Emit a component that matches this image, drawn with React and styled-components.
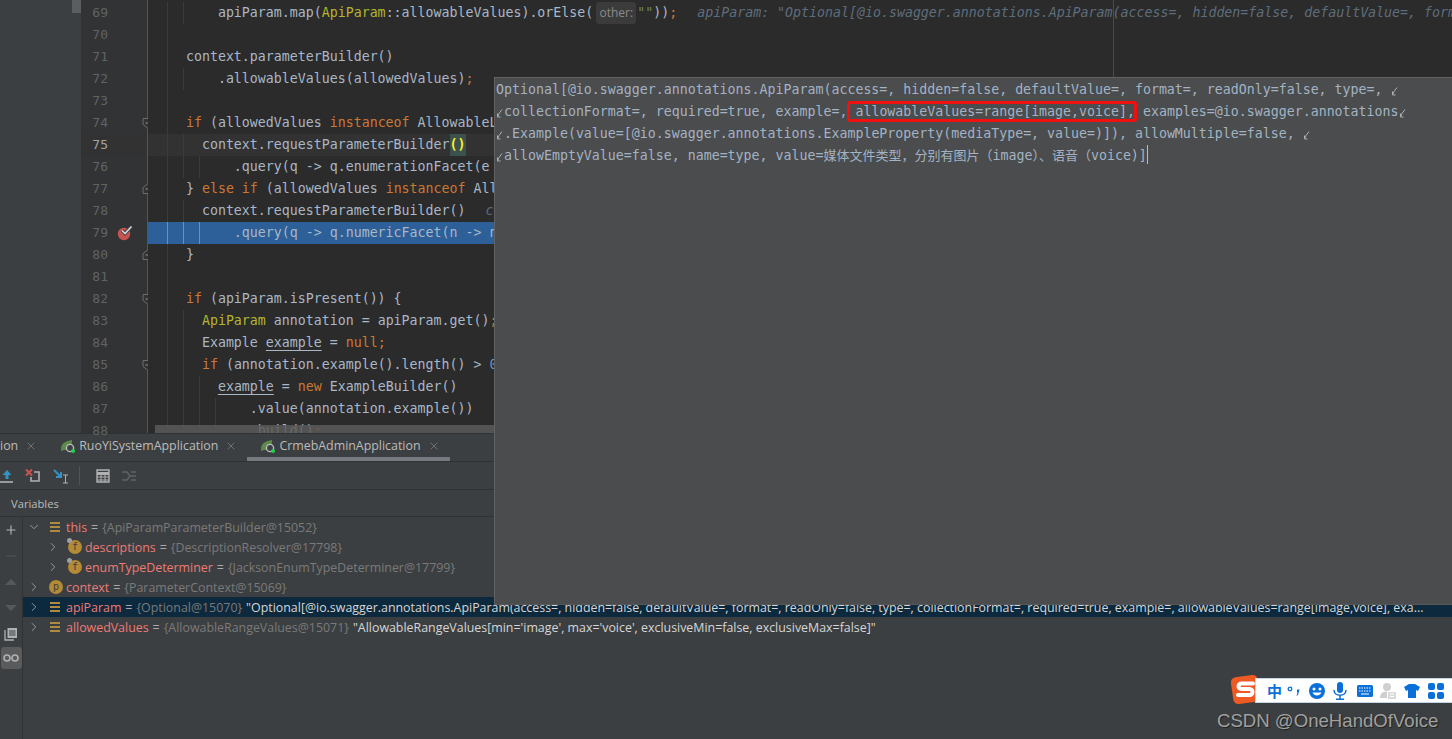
import React from "react";
import styled, { createGlobalStyle } from "styled-components";
import { ChevronRight, ChevronDown, Plus, Minus, X } from "lucide-react";

const MONO = `"DejaVu Sans Mono", "Noto Sans CJK SC", monospace`;
const UI = `"Open Sans", "Liberation Sans", sans-serif`;

const GlobalStyle = createGlobalStyle`
  html, body { margin: 0; padding: 0; background: #3c3f41; }
`;

const Screen = styled.div`
  position: relative;
  width: 1452px;
  height: 739px;
  overflow: hidden;
  display: flex;
  flex-direction: column;
  background: #3c3f41;
`;

const Top = styled.div`
  display: flex;
  height: 433px;
  flex: none;
`;

const ProjectStrip = styled.div`
  width: 81px;
  flex: none;
  display: flex;
  justify-content: flex-end;
  align-items: flex-start;
  background: #3c3f41;
`;

const ProjectThumb = styled.div`
  width: 9px;
  height: 13px;
  background: #5b5e60;
`;

const Gutter = styled.div`
  width: 66px;
  flex: none;
  padding-top: 2px;
  background: #313335;
  border-right: 1px solid #555555;
  box-sizing: content-box;
`;

const GutterRow = styled.div`
  position: relative;
  display: flex;
  align-items: center;
  height: 22px;
  background: ${(p) => (p.$current ? "#323232" : "transparent")};
`;

const LineNo = styled.span`
  width: 27px;
  text-align: right;
  font: 13px/22px ${MONO};
  color: ${(p) => (p.$current ? "#a4a3a3" : "#606366")};
`;

const Fold = styled.svg`
  position: absolute;
  right: -6px;
  top: 5px;
  width: 11px;
  height: 12px;
`;

const Breakpoint = styled.svg`
  width: 18px;
  height: 18px;
  margin-left: 8px;
`;

const CodePane = styled.div`
  position: relative;
  flex: 1;
  min-width: 0;
  padding-top: 2px;
  background: #2b2b2b;
  overflow: hidden;
`;

const CodeRow = styled.div`
  position: relative;
  height: 22px;
  padding-left: 6px;
  white-space: pre;
  font: 13.28px/22px ${MONO};
  color: #a9b7c6;
  background: ${(p) => (p.$exec ? "#2d5f98" : p.$current ? "#323232" : "transparent")};
`;

const Guide = styled.i`
  position: absolute;
  top: 0;
  bottom: 0;
  left: ${(p) => p.$x - 148}px;
  width: 1px;
  background: ${(p) => (p.$exec ? "#6d90b8" : "#3b3b3b")};
`;

const Margin = styled.div`
  position: absolute;
  top: 0;
  bottom: 0;
  left: 965px;
  width: 1px;
  background: #4a4a4a;
`;

const COLORS = {
  kw: "#cc7832",
  type: "#b4b52c",
  str: "#6a8759",
  num: "#6897bb",
  muted: "#808080",
};

const Tok = styled.span`
  position: relative;
  color: ${(p) => COLORS[p.$k] || "inherit"};
  text-decoration: ${(p) => (p.$k === "under" ? "underline" : "none")};
  text-underline-offset: 3px;
`;

const ParenMatch = styled.span`
  background: #3b514d;
  color: #ffef28;
  font-weight: bold;
  display: inline-block;
  height: 22px;
`;

const ParamHint = styled.span`
  display: inline-block;
  width: 40px;
  height: 22px;
  margin: 0 1px 0 3px;
  vertical-align: top;
  text-align: center;
  background: #3b3b3b;
  border-radius: 3px;
  color: #8a8a8a;
  font: 12px/22px ${UI};
`;

const InlineDebug = styled.span`
  font-style: italic;
  color: #5e6d7c;
  margin-left: ${(p) => p.$gap || 20}px;
`;

const EditorScroll = styled.div`
  position: absolute;
  left: 7px;
  right: 0;
  bottom: 0;
  height: 8px;
  background: rgba(90, 90, 90, 0.85);
`;

const Panel = styled.div`
  flex: 1;
  min-height: 0;
  display: flex;
  flex-direction: column;
  border-top: 1px solid #2f3133;
  font-family: ${UI};
`;

const TabBar = styled.div`
  display: flex;
  height: 27px;
  flex: none;
  border-bottom: 1px solid #323232;
`;

const Tab = styled.div`
  display: flex;
  align-items: center;
  height: 100%;
  box-sizing: border-box;
  padding: ${(p) => (p.$clipped ? "0 10px 0 0" : "0 10px 0 13px")};
  color: #bbbbbb;
  font-size: 12.4px;
  border-bottom: ${(p) => (p.$active ? "4px solid #747a80" : "4px solid transparent")};
`;

const TabLabel = styled.span`
  margin: 0 7px 0 4px;
  margin-left: ${(p) => (p.$clipped ? 0 : 4)}px;
`;

const TabClose = styled(X)`
  width: 12px;
  height: 12px;
  color: #6e7072;
`;

const Toolbar = styled.div`
  display: flex;
  align-items: center;
  height: 27px;
  flex: none;
  gap: 9px;
  padding-left: 0;
  border-bottom: 1px solid #323232;
`;

const ToolSep = styled.div`
  width: 1px;
  height: 19px;
  background: #515355;
`;

const ToolIcon = styled.svg`
  width: 18px;
  height: 16px;
  flex: none;
`;

const PaneHeader = styled.div`
  height: 26px;
  flex: none;
  display: flex;
  align-items: center;
  padding-left: 11px;
  color: #bbbbbb;
  font-size: 11.2px;
  border-bottom: 1px solid #323232;
`;

const PaneBody = styled.div`
  flex: 1;
  min-height: 0;
  display: flex;
`;

const SideStrip = styled.div`
  width: 22px;
  flex: none;
  display: flex;
  flex-direction: column;
  align-items: center;
  border-right: 1px solid #323232;
`;

const SideBtn = styled.div`
  width: 21px;
  height: ${(p) => p.$h || 26}px;
  display: flex;
  align-items: center;
  justify-content: center;
  color: ${(p) => (p.$dim ? "#55585a" : "#afb1b3")};
  background: ${(p) => (p.$active ? "#595b5d" : "transparent")};
  border-radius: 3px;
`;

const Tree = styled.div`
  flex: 1;
  min-width: 0;
  overflow: hidden;
  font-size: 12.4px;
`;

const TreeRow = styled.div`
  display: flex;
  align-items: center;
  height: 20px;
  white-space: nowrap;
  padding-left: ${(p) => 3 + 19 * p.$depth}px;
  background: ${(p) => (p.$selected ? "#0d293e" : "transparent")};
`;

const Chevron = styled.span`
  width: 16px;
  display: flex;
  justify-content: center;
  color: #9ea1a3;
  flex: none;
`;

const KindIcon = styled.span`
  position: relative;
  width: 16px;
  height: 16px;
  margin: 0 2px 0 6px;
  display: flex;
  align-items: center;
  justify-content: center;
  flex: none;
`;

const Bars = styled.span`
  width: 10px;
  height: 10px;
  margin-right: 2px;
  background: repeating-linear-gradient(#b08a3e 0 2px, transparent 2px 4px);
`;

const Badge = styled.span`
  width: 14px;
  height: 14px;
  border-radius: 50%;
  background: #b38a35;
  color: #3c3f41;
  font: 10px/14px ${MONO};
  text-align: center;
`;

const Pin = styled.i`
  position: absolute;
  left: 0;
  top: -1px;
  width: 5px;
  height: 5px;
  border-radius: 50%;
  background: #9aa0a6;
`;

const VarName = styled.span`
  color: #ed7b75;
`;

const Eq = styled.span`
  color: #a9a9a9;
  margin: 0 4px;
`;

const VarRef = styled.span`
  color: #7a7a7a;
`;

const VarValue = styled.span`
  color: #d6d6d6;
  margin-left: 4px;
`;

const Popup = styled.div`
  position: absolute;
  left: 494px;
  top: 77px;
  width: 958px;
  height: 528px;
  box-sizing: border-box;
  padding: 1px 0 0 1px;
  background: #4b4c4d;
  border-left: 1px solid #606263;
  border-top: 1px solid #606263;
  border-bottom: 1px solid #555758;
  font: 13.28px/22px ${MONO};
  color: #a3b3c4;
  white-space: pre;
`;

const PopupLine = styled.div`
  position: relative;
  height: 22px;
  padding-left: ${(p) => (p.$cont ? 8 : 0)}px;
`;

const WrapStart = styled.svg`
  position: absolute;
  left: 0;
  top: 7px;
  width: 8px;
  height: 11px;
`;

const WrapEnd = styled.svg`
  display: inline-block;
  vertical-align: -3px;
  width: 8px;
  height: 11px;
`;

const Boxed = styled.span`
  position: relative;
  &::after {
    content: "";
    position: absolute;
    left: -8px;
    right: -2px;
    top: -3px;
    bottom: -3px;
    border: 3px solid #f01010;
    border-radius: 3px;
  }
`;

const Cjk = styled.span`
  font-size: 13px;
`;

const Caret = styled.span`
  display: inline-block;
  width: 1px;
  height: 19px;
  vertical-align: -4px;
  background: #bbbbbb;
`;

const ImeBar = styled.div`
  position: absolute;
  left: 1255px;
  top: 678px;
  width: 197px;
  height: 25px;
  box-sizing: border-box;
  display: flex;
  align-items: center;
  background: #ffffff;
  border: 1px solid #c5d6e8;
  border-right: 0;
  color: #0a6fd8;
`;

const ImeText = styled.span`
  font: bold 15px "Noto Sans CJK SC", sans-serif;
  margin-left: 11px;
`;

const ImeGlyph = styled.svg`
  width: 18px;
  height: 18px;
  margin-left: ${(p) => p.$gap}px;
  flex: none;
`;

const ImeLogo = styled.svg`
  position: absolute;
  left: 1229px;
  top: 673px;
  width: 33px;
  height: 33px;
`;

const Watermark = styled.div`
  position: absolute;
  left: 1217px;
  top: 709px;
  font: 18.6px/24px "Liberation Sans", sans-serif;
  color: #a0a0a0;
  text-shadow: 1px 1px 1px #202020;
`;

const T = ([k, text], i) => (
  <Tok key={i} $k={k}>
    {text}
  </Tok>
);

const LINES = [
  { n: 69, g: [183], code: [["", "        apiParam.map("], ["type", "ApiParam"], ["", "::allowableValues).orElse("]], hint: true },
  { n: 70, code: [] },
  { n: 71, code: [["", "    context.parameterBuilder()"]] },
  { n: 72, g: [183], code: [["", "        .allowableValues(allowedValues)"], ["kw", ";"]] },
  { n: 73, code: [] },
  { n: 74, fold: "open", code: [["kw", "    if "], ["", "(allowedValues "], ["kw", "instanceof "], ["", "AllowableListValues) {"]] },
  { n: 75, current: true, g: [183], code: [["", "      context.requestParameterBuilder"]], match: true },
  { n: 76, g: [183, 199], code: [["", "          .query(q -> q.enumerationFacet(e -> e.allowedValues(allowedValues)));"]] },
  { n: 77, fold: "close", code: [["", "    } "], ["kw", "else if "], ["", "(allowedValues "], ["kw", "instanceof "], ["", "AllowableRangeValues) {"]] },
  { n: 78, g: [183], code: [["", "      context.requestParameterBuilder()"]], debug: "context: ParameterContext@15069" },
  { n: 79, exec: true, bp: true, g: [183, 199], code: [["", "          .query(q -> q.numericFacet(n -> n.from(allowedValues)));"]] },
  { n: 80, fold: "close", code: [["", "    }"]] },
  { n: 81, code: [] },
  { n: 82, fold: "open", code: [["kw", "    if "], ["", "(apiParam.isPresent()) {"]] },
  { n: 83, g: [183], code: [["", "      "], ["type", "ApiParam"], ["", " annotation = apiParam.get()"], ["kw", ";"]] },
  { n: 84, g: [183], code: [["", "      Example "], ["under", "example"], ["", " = "], ["kw", "null;"]] },
  { n: 85, fold: "open", g: [183], code: [["kw", "      if "], ["", "(annotation.example().length() > "], ["num", "0"], ["", ") {"]] },
  { n: 86, g: [183, 199], code: [["", "        "], ["under", "example"], ["", " = "], ["kw", "new "], ["", "ExampleBuilder()"]] },
  { n: 87, g: [183, 199, 215], code: [["", "            .value(annotation.example())"]] },
  { n: 88, g: [183, 199, 215], code: [["", "            .build()"], ["kw", ";"]] },
];

const DEBUG_TEXT = `apiParam: "Optional[@io.swagger.annotations.ApiParam(access=, hidden=false, defaultValue=, format=, readOnly=false`;

const LONG_VALUE = `"Optional[@io.swagger.annotations.ApiParam(access=, hidden=false, defaultValue=, format=, readOnly=false, type=, collectionFormat=, required=true, example=, allowableValues=range[image,voice], exa...`;

function FoldMark({ kind }) {
  const d = kind === "open" ? "M1 1.5H10V7.5L5.5 11L1 7.5Z" : "M1 10.5H10V4.5L5.5 1L1 4.5Z";
  return (
    <Fold viewBox="0 0 11 12">
      <path d={d} fill="#313335" stroke="#6b6e70" />
      <path d="M3.5 6H7.5" stroke="#8c8f91" />
    </Fold>
  );
}

function BreakpointMark() {
  return (
    <Breakpoint viewBox="0 0 18 18">
      <circle cx="8" cy="10" r="6.2" fill="#c75450" />
      <path d="M6 6.5L9 9.5L15.5 2.5" fill="none" stroke="#3c3f41" strokeWidth="3.4" />
      <path d="M6 6.5L9 9.5L15.5 2.5" fill="none" stroke="#d8d8d8" strokeWidth="1.6" />
    </Breakpoint>
  );
}

function SpringRun() {
  return (
    <svg width="15" height="14" viewBox="0 0 15 14" style={{ flex: "none" }}>
      <path d="M1 10C1 4 6 2 12 1C12 7 10 11 5 11C3 11 2 12 1 12Z" fill="#5c8a4a" />
      <circle cx="10" cy="9" r="3.6" fill="#3c3f41" stroke="#b9bcbe" strokeWidth="1.4" />
      <circle cx="13" cy="12" r="2" fill="#1fd14a" />
    </svg>
  );
}

function WrapGlyph({ as: Comp }) {
  return (
    <Comp viewBox="0 0 8 11">
      <path d="M6 1.5L3 5.5L1.5 9M1.5 5.5V9H4.5" fill="none" stroke="#a9b0b6" strokeWidth="1" />
    </Comp>
  );
}

function ToolbarIcons() {
  return (
    <Toolbar>
      <ToolIcon viewBox="0 0 18 16" style={{ marginLeft: -2 }}>
        <path d="M9 2L4.5 7H7.5V11H10.5V7H13.5Z" fill="#3592c4" />
        <path d="M1 14H15" stroke="#afb1b3" strokeWidth="1.6" />
      </ToolIcon>
      <ToolIcon viewBox="0 0 18 16">
        <path d="M1 1.5L7 7.5M7 1.5L1 7.5" stroke="#c75450" strokeWidth="2" />
        <path d="M9 4H14V13H6V9" fill="none" stroke="#afb1b3" strokeWidth="1.6" />
      </ToolIcon>
      <ToolIcon viewBox="0 0 18 16">
        <path d="M2 2L9 9M9 4V9H4" fill="none" stroke="#3592c4" strokeWidth="2" />
        <path d="M11 7H16M13.5 7V15M11 15H16" fill="none" stroke="#afb1b3" strokeWidth="1" />
      </ToolIcon>
      <ToolSep />
      <ToolIcon viewBox="0 0 18 16" style={{ marginLeft: 5 }}>
        <path d="M3 2H15V14H3Z" fill="none" stroke="#afb1b3" strokeWidth="1.4" />
        <path d="M3 5.5H15" stroke="#afb1b3" strokeWidth="3" />
        <path d="M3 9H15M3 12H15M7 6V14M11 6V14" stroke="#afb1b3" />
      </ToolIcon>
      <ToolIcon viewBox="0 0 18 16" style={{ marginLeft: -1 }}>
        <path d="M2 4H7L10 8H16M2 12H7L10 8M11 4H16M11 12H16" fill="none" stroke="#606366" strokeWidth="1.5" />
      </ToolIcon>
    </Toolbar>
  );
}

function ImeIcons() {
  return (
    <ImeBar>
      <ImeText>中</ImeText>
      <ImeGlyph $gap={3} viewBox="0 0 18 18">
        <circle cx="5" cy="7" r="1.8" fill="none" stroke="#0a6fd8" strokeWidth="1.3" />
        <path d="M12 7.5H14.5L13 13L11.5 14L12.5 10.5H12Z" fill="#0a6fd8" />
      </ImeGlyph>
      <ImeGlyph $gap={5} viewBox="0 0 18 18">
        <circle cx="9" cy="9" r="8" fill="#0a6fd8" />
        <circle cx="6" cy="7" r="1.5" fill="#fff" />
        <circle cx="12" cy="7" r="1.5" fill="#fff" />
        <path d="M4.5 10.5C6 14.5 12 14.5 13.5 10.5Z" fill="#fff" />
      </ImeGlyph>
      <ImeGlyph $gap={5} viewBox="0 0 18 18">
        <rect x="6" y="0" width="6" height="11" rx="3" fill="#0a6fd8" />
        <path d="M3 8C3 15 15 15 15 8M9 13V17M5 17.3H13" fill="none" stroke="#0a6fd8" strokeWidth="1.5" />
      </ImeGlyph>
      <ImeGlyph $gap={7} viewBox="0 0 18 18">
        <rect x="1" y="3" width="16" height="12" rx="1.5" fill="#0a6fd8" />
        <path d="M3 6H15M3 9H15" stroke="#fff" strokeDasharray="1.5 1" />
        <path d="M5 12H13" stroke="#fff" />
      </ImeGlyph>
      <ImeGlyph $gap={5} viewBox="0 0 18 18">
        <circle cx="8" cy="5" r="4" fill="#cfcfcf" />
        <path d="M1 16C1 11 4 9.5 8 9.5V16Z" fill="#cfcfcf" />
        <rect x="9" y="10" width="8" height="7" fill="#d9d9d9" />
        <path d="M11 12H15M11 14.5H15" stroke="#fff" />
      </ImeGlyph>
      <ImeGlyph $gap={6} viewBox="0 0 18 18">
        <path d="M6 2H12L17 5L15 9L13 8V16H5V8L3 9L1 5Z" fill="#0a6fd8" />
      </ImeGlyph>
      <ImeGlyph $gap={6} viewBox="0 0 18 18">
        <rect x="1" y="1" width="7" height="7" rx="2" fill="#0a6fd8" />
        <rect x="10" y="1" width="7" height="7" rx="2" fill="#0a6fd8" />
        <rect x="1" y="10" width="7" height="7" rx="2" fill="#0a6fd8" />
        <rect x="10" y="10" width="7" height="7" rx="2" fill="#0a6fd8" />
      </ImeGlyph>
    </ImeBar>
  );
}

function VarRow({ depth = 0, open, kind, name, refText, value, selected }) {
  const Arrow = open ? ChevronDown : ChevronRight;
  return (
    <TreeRow $depth={depth} $selected={selected}>
      <Chevron>
        <Arrow size={14} strokeWidth={1.6} />
      </Chevron>
      <KindIcon>
        {kind === "bars" ? (
          <Bars />
        ) : (
          <>
            <Badge>{kind}</Badge>
            {kind === "f" && <Pin />}
          </>
        )}
      </KindIcon>
      <VarName>{name}</VarName>
      <Eq>=</Eq>
      <VarRef>{refText}</VarRef>
      {value && <VarValue>{value}</VarValue>}
    </TreeRow>
  );
}

export default function App() {
  return (
    <Screen>
      <GlobalStyle />
      <Top>
        <ProjectStrip>
          <ProjectThumb />
        </ProjectStrip>
        <Gutter>
          {LINES.map((l) => (
            <GutterRow key={l.n} $current={l.current}>
              <LineNo $current={l.current}>{l.n}</LineNo>
              {l.bp && <BreakpointMark />}
              {l.fold && <FoldMark kind={l.fold} />}
            </GutterRow>
          ))}
        </Gutter>
        <CodePane>
          {LINES.map((l) => (
            <CodeRow key={l.n} $current={l.current} $exec={l.exec}>
              <Guide $x={167} $exec={l.exec} />
              {(l.g || []).map((x) => (
                <Guide key={x} $x={x} $exec={l.exec} />
              ))}
              {l.code.map(T)}
              {l.match && <ParenMatch>()</ParenMatch>}
              {l.hint && (
                <>
                  <ParamHint>other:</ParamHint>
                  <Tok $k="str">""</Tok>
                  <Tok>))</Tok>
                  <Tok $k="kw">;</Tok>
                  <InlineDebug>{DEBUG_TEXT}</InlineDebug>
                </>
              )}
              {l.debug && <InlineDebug>{l.debug}</InlineDebug>}
            </CodeRow>
          ))}
          <Margin />
          <EditorScroll />
        </CodePane>
      </Top>

      <Panel>
        <TabBar>
          <Tab $clipped>
            <TabLabel $clipped>ion</TabLabel>
            <TabClose />
          </Tab>
          <Tab>
            <SpringRun />
            <TabLabel>RuoYiSystemApplication</TabLabel>
            <TabClose />
          </Tab>
          <Tab $active>
            <SpringRun />
            <TabLabel>CrmebAdminApplication</TabLabel>
            <TabClose />
          </Tab>
        </TabBar>
        <ToolbarIcons />
        <PaneHeader>Variables</PaneHeader>
        <PaneBody>
          <SideStrip>
            <SideBtn>
              <Plus size={14} strokeWidth={2} />
            </SideBtn>
            <SideBtn $dim>
              <Minus size={14} strokeWidth={2} />
            </SideBtn>
            <SideBtn $dim>
              <svg width="12" height="8" viewBox="0 0 12 8">
                <path d="M6 1L12 7H0Z" fill="currentColor" />
              </svg>
            </SideBtn>
            <SideBtn $dim>
              <svg width="12" height="8" viewBox="0 0 12 8">
                <path d="M6 7L12 1H0Z" fill="currentColor" />
              </svg>
            </SideBtn>
            <SideBtn>
              <svg width="14" height="14" viewBox="0 0 14 14">
                <path d="M1 3V13H10" fill="none" stroke="currentColor" strokeWidth="1.3" />
                <path d="M3.5 1H13V11H3.5Z" fill="currentColor" />
                <path d="M5 4H11.5M5 6H11.5M5 8H11.5" stroke="#3c3f41" />
              </svg>
            </SideBtn>
            <SideBtn $active $h={22}>
              <svg width="16" height="8" viewBox="0 0 16 8">
                <circle cx="4" cy="4" r="3" fill="none" stroke="currentColor" strokeWidth="1.6" />
                <circle cx="12" cy="4" r="3" fill="none" stroke="currentColor" strokeWidth="1.6" />
              </svg>
            </SideBtn>
          </SideStrip>
          <Tree>
            <VarRow open kind="bars" name="this" refText="{ApiParamParameterBuilder@15052}" />
            <VarRow depth={1} kind="f" name="descriptions" refText="{DescriptionResolver@17798}" />
            <VarRow depth={1} kind="f" name="enumTypeDeterminer" refText="{JacksonEnumTypeDeterminer@17799}" />
            <VarRow kind="p" name="context" refText="{ParameterContext@15069}" />
            <VarRow selected kind="bars" name="apiParam" refText="{Optional@15070}" value={LONG_VALUE} />
            <VarRow
              kind="bars"
              name="allowedValues"
              refText="{AllowableRangeValues@15071}"
              value={`"AllowableRangeValues[min='image', max='voice', exclusiveMin=false, exclusiveMax=false]"`}
            />
          </Tree>
        </PaneBody>
      </Panel>

      <Popup>
        <PopupLine>
          Optional[@io.swagger.annotations.ApiParam(access=, hidden=false, defaultValue=, format=, readOnly=false, type=, <WrapGlyph as={WrapEnd} />
        </PopupLine>
        <PopupLine $cont>
          <WrapGlyph as={WrapStart} />
          {"collectionFormat=, required=true, example=, "}
          <Boxed>allowableValues=range[image,voice],</Boxed>
          {" examples=@io.swagger.annotations"}
          <WrapGlyph as={WrapEnd} />
        </PopupLine>
        <PopupLine $cont>
          <WrapGlyph as={WrapStart} />
          .Example(value=[@io.swagger.annotations.ExampleProperty(mediaType=, value=)]), allowMultiple=false, <WrapGlyph as={WrapEnd} />
        </PopupLine>
        <PopupLine $cont>
          <WrapGlyph as={WrapStart} />
          {"allowEmptyValue=false, name=type, value="}
          <Cjk>媒体文件类型，分别有图片（</Cjk>
          image
          <Cjk>）、语音（</Cjk>
          {"voice)]"}
          <Caret />
        </PopupLine>
      </Popup>

      <ImeLogo viewBox="0 0 33 33">
        <rect x="3" y="3" width="27" height="27" rx="5" fill="#ee5a24" transform="rotate(-8 16.5 16.5)" />
        <path d="M24 10.5H12.5C8.5 10.5 8.5 16 12.5 16H20.5C24.5 16 24.5 22 20.5 22H9" fill="none" stroke="#fff" strokeWidth="4" strokeLinecap="round" />
      </ImeLogo>
      <ImeIcons />
      <Watermark>CSDN @OneHandOfVoice</Watermark>
    </Screen>
  );
}
